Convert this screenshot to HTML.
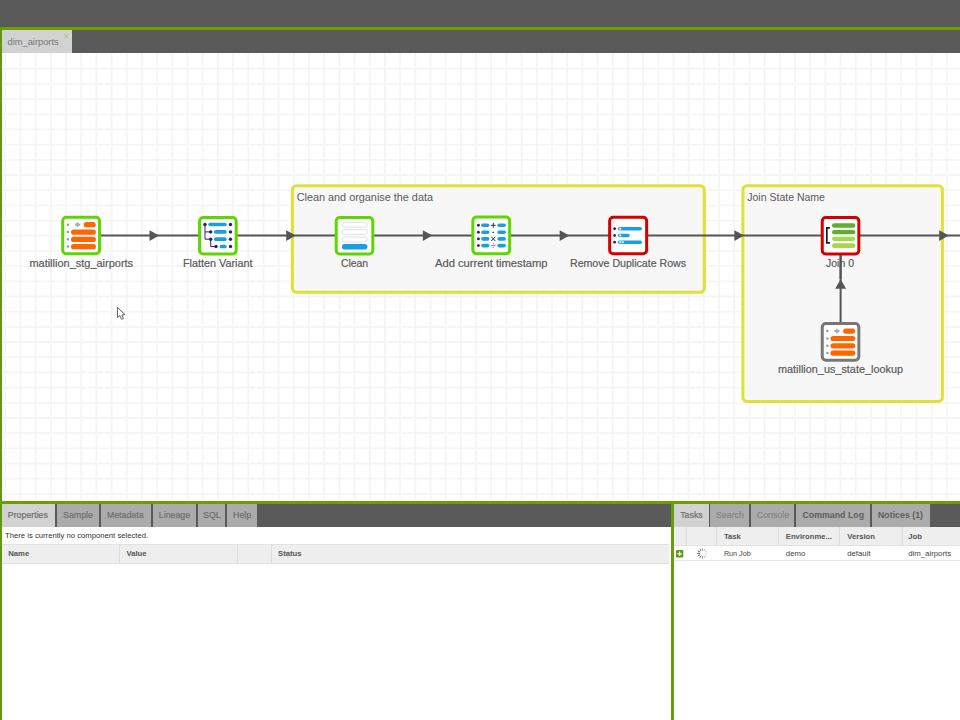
<!DOCTYPE html>
<html><head><meta charset="utf-8">
<style>
html,body{margin:0;padding:0}
body{width:960px;height:720px;overflow:hidden;background:#5a5a5a;position:relative;font-family:"Liberation Sans",sans-serif}
.a{position:absolute}
.tb{position:absolute;top:503.5px;height:23.2px;background:#ababab;color:#6e6e6e;-webkit-text-stroke:0.2px currentColor;font-size:8.8px;white-space:nowrap}
.tb span{position:absolute;top:6.2px;line-height:11px}
.hd{position:absolute;font-weight:bold;color:#555;font-size:7.7px;line-height:10px;white-space:nowrap}
.dt{position:absolute;color:#444;font-size:7.8px;line-height:10px;white-space:nowrap}
.vs{position:absolute;width:1px;background:#dddddd}
</style></head><body>
<!-- frame green lines -->
<div class="a" style="left:0;top:27.3px;width:960px;height:2.6px;background:#6a9e02"></div>
<div class="a" style="left:0;top:27.3px;width:2px;height:693px;background:#5f9a0a"></div>
<!-- job tab -->
<div class="a" style="left:2px;top:30px;width:70px;height:23px;background:#d2d2d2"></div>
<div class="a" style="left:7.5px;top:36.5px;font-size:9.3px;line-height:11px;color:#777;white-space:nowrap">dim_airports</div>
<svg class="a" style="left:0;top:0" width="960" height="60"><path d="M64.1 33.9L68.7 38.5M68.7 33.9L64.1 38.5" stroke="#9ccc5a" stroke-width="1"/></svg>

<!-- CANVAS -->
<div class="a" style="left:2px;top:53px;width:958px;height:448px;background:#fff"></div>
<svg class="a" style="left:0;top:0" width="960" height="720">
<defs><clipPath id="cv"><rect x="2" y="53" width="958" height="448"/></clipPath></defs>
<g clip-path="url(#cv)">
<path d="M5.3 53V500M20.5 53V500M35.7 53V500M50.9 53V500M66.1 53V500M81.2 53V500M96.4 53V500M111.6 53V500M126.8 53V500M142.0 53V500M157.2 53V500M172.3 53V500M187.5 53V500M202.7 53V500M217.9 53V500M233.1 53V500M248.3 53V500M263.5 53V500M278.6 53V500M293.8 53V500M309.0 53V500M324.2 53V500M339.4 53V500M354.6 53V500M369.8 53V500M384.9 53V500M400.1 53V500M415.3 53V500M430.5 53V500M445.7 53V500M460.9 53V500M476.1 53V500M491.2 53V500M506.4 53V500M521.6 53V500M536.8 53V500M552.0 53V500M567.2 53V500M582.3 53V500M597.5 53V500M612.7 53V500M627.9 53V500M643.1 53V500M658.3 53V500M673.5 53V500M688.6 53V500M703.8 53V500M719.0 53V500M734.2 53V500M749.4 53V500M764.6 53V500M779.8 53V500M794.9 53V500M810.1 53V500M825.3 53V500M840.5 53V500M855.7 53V500M870.9 53V500M886.0 53V500M901.2 53V500M916.4 53V500M931.6 53V500M946.8 53V500M2 68.7H960M2 83.9H960M2 99.1H960M2 114.3H960M2 129.4H960M2 144.6H960M2 159.8H960M2 175.0H960M2 190.2H960M2 205.4H960M2 220.6H960M2 235.7H960M2 250.9H960M2 266.1H960M2 281.3H960M2 296.5H960M2 311.7H960M2 326.8H960M2 342.0H960M2 357.2H960M2 372.4H960M2 387.6H960M2 402.8H960M2 418.0H960M2 433.1H960M2 448.3H960M2 463.5H960M2 478.7H960M2 493.9H960" stroke="#f5f5f5" stroke-width="1.8" fill="none"/>
<!-- groups -->
<rect x="292.4" y="185.7" width="411.9" height="106.55" rx="4" fill="#f7f7f7" stroke="#dfe232" stroke-width="3"/>
<rect x="742.9" y="185.7" width="199.5" height="215.7" rx="4" fill="#f7f7f7" stroke="#dfe232" stroke-width="3"/>
<text x="296.7" y="201.3" font-size="10.7" fill="#5a5a5a" textLength="136.3" lengthAdjust="spacingAndGlyphs">Clean and organise the data</text>
<text x="747.25" y="201.3" font-size="10.55" fill="#5a5a5a" textLength="77.7" lengthAdjust="spacingAndGlyphs">Join State Name</text>
<!-- connectors -->
<path d="M81 235.6H960M840.6 235.6V342" stroke="#555" stroke-width="2" fill="none"/>
<g fill="#555">
<path d="M149.5 230.3L159.1 235.6L149.5 240.9Z"/>
<path d="M286.2 230.3L295.8 235.6L286.2 240.9Z"/>
<path d="M422.8 230.3L432.4 235.6L422.8 240.9Z"/>
<path d="M559.7 230.3L569.3 235.6L559.7 240.9Z"/>
<path d="M734.4 230.3L744 235.6L734.4 240.9Z"/>
<path d="M939.2 230.3L948.8 235.6L939.2 240.9Z"/>
<path d="M835.1 288.7L840.6 279.2L846.1 288.7Z"/>
</g>
<!-- node 1 -->
<g transform="translate(81.1 235.5)">
<rect x="-18.4" y="-18.3" width="36.8" height="36.6" rx="3.6" fill="#fff" stroke="#5ed600" stroke-width="3"/>
<g fill="#9a9a9a"><circle cx="-13.2" cy="-10.8" r="1.25"/><circle cx="-13.2" cy="-3.5" r="1.25"/><circle cx="-13.2" cy="3.8" r="1.25"/><circle cx="-13.2" cy="11" r="1.25"/>
<path fill="#aaa" d="M-6.1 -12H-4.3V-13.75L-0.35 -10.85L-4.3 -7.95V-9.7H-6.1Z"/></g>
<g fill="#ff6600"><rect x="2.6" y="-13.5" width="12" height="5.3" rx="2.65"/><rect x="-10.1" y="-6" width="24.9" height="5.2" rx="2.6"/><rect x="-10.1" y="1.3" width="24.9" height="5.2" rx="2.6"/><rect x="-10.1" y="8.6" width="24.9" height="5.2" rx="2.6"/></g>
</g>
<!-- node 2 flatten -->
<g transform="translate(217.9 235.6)">
<rect x="-18.3" y="-18.2" width="36.6" height="36.6" rx="3.6" fill="#fff" stroke="#5ed600" stroke-width="3"/>
<g fill="#1a9fe0"><rect x="-9.6" y="-12.95" width="18.4" height="3.7" rx="1.85"/><rect x="-3.9" y="-5.55" width="12.7" height="3.7" rx="1.85"/><rect x="-3.9" y="1.75" width="12.7" height="3.7" rx="1.85"/><rect x="1.8" y="9.05" width="7" height="3.7" rx="1.85"/></g>
<path d="M-12.9 -11.1V3.6H-7.2V10.9H-1.9M-12.9 -3.7H-7.2" stroke="#2a2370" stroke-width="1" fill="none"/>
<g fill="#2a2370"><circle cx="-12.9" cy="-11.1" r="1.7"/><circle cx="-7.2" cy="-3.7" r="1.7"/><circle cx="-7.2" cy="3.6" r="1.7"/><circle cx="-1.9" cy="10.9" r="1.7"/>
<circle cx="12.6" cy="-11.1" r="1.7"/><circle cx="12.6" cy="-3.7" r="1.7"/><circle cx="12.6" cy="3.6" r="1.7"/><circle cx="12.6" cy="10.9" r="1.7"/></g>
</g>
<!-- node 3 clean -->
<g transform="translate(354.5 235.6)">
<rect x="-18.3" y="-18.2" width="36.6" height="36.6" rx="3.6" fill="#fff" stroke="#5ed600" stroke-width="3"/>
<g fill="#fff" stroke="#dcdce4" stroke-width="0.9"><rect x="-12.5" y="-13.2" width="25.3" height="4.7" rx="2.35"/><rect x="-12.5" y="-5.9" width="25.3" height="4.7" rx="2.35"/><rect x="-12.5" y="1.5" width="25.3" height="4.9" rx="2.4"/></g>
<rect x="-12.6" y="8.4" width="25.5" height="5.6" rx="2.8" fill="#1a9ee0"/>
</g>
<!-- node 4 add timestamp -->
<g transform="translate(491.25 235.4)">
<rect x="-18.4" y="-18.3" width="36.8" height="36.6" rx="3.6" fill="#fff" stroke="#5ed600" stroke-width="3"/>
<g fill="#1a9fe0"><rect x="-10.1" y="-11.9" width="8.2" height="3.6" rx="1.8"/><rect x="6.1" y="-11.9" width="8.6" height="3.6" rx="1.8"/>
<rect x="-10.1" y="-4.9" width="8.2" height="3.6" rx="1.8"/><rect x="6.1" y="-4.9" width="8.6" height="3.6" rx="1.8"/>
<rect x="-10.1" y="1.7" width="8.2" height="3.6" rx="1.8"/><rect x="6.1" y="1.7" width="8.6" height="3.6" rx="1.8"/>
<rect x="-10.1" y="8.4" width="8.2" height="3.6" rx="1.8"/><rect x="6.1" y="8.4" width="8.6" height="3.6" rx="1.8"/></g>
<g fill="#2a2370"><circle cx="-12.85" cy="-10.1" r="1.45"/><circle cx="-12.85" cy="-3.1" r="1.45"/><circle cx="-12.85" cy="3.5" r="1.45"/><circle cx="-12.85" cy="10.2" r="1.45"/></g>
<path d="M2.05 -12.5V-7.7M-0.35 -10.1H4.45M1.1 -3.1H3" stroke="#2a2370" stroke-width="1" fill="none"/>
<path d="M0 1.4L4.1 5.6M4.1 1.4L0 5.6" stroke="#2a2370" stroke-width="1" fill="none"/>
<path d="M-0.3 10.2H4.4" stroke="#8a84c0" stroke-width="1" fill="none"/>
<g fill="#8a84c0"><circle cx="2.05" cy="8.2" r="0.7"/><circle cx="2.05" cy="12.2" r="0.7"/></g>
</g>
<!-- node 5 remove duplicates -->
<g transform="translate(628.15 235.5)">
<rect x="-18.5" y="-18.3" width="37" height="36.6" rx="3.6" fill="#fff" stroke="#d40000" stroke-width="3"/>
<g fill="#1a9fe0"><rect x="-10.35" y="-8.5" width="24.2" height="3.5" rx="1.75"/><rect x="-10.35" y="-1.75" width="11.9" height="3.5" rx="1.75"/><rect x="-10.35" y="4.95" width="24.2" height="3.5" rx="1.75"/></g>
<g fill="#d8f0fc"><rect x="-8.9" y="-7.75" width="2" height="2"/><rect x="-8.9" y="-1" width="2" height="2"/><rect x="-8.9" y="5.7" width="2" height="2"/><rect x="-6.4" y="5.7" width="2" height="2"/></g>
<g fill="#2a2370"><circle cx="-13.55" cy="-6.75" r="1.4"/><circle cx="-13.55" cy="0" r="1.4"/><circle cx="-13.55" cy="6.7" r="1.4"/></g>
</g>
<!-- node 6 join -->
<g transform="translate(840.55 235.6)">
<rect x="-18.3" y="-18.2" width="36.6" height="36.6" rx="3.6" fill="#fff" stroke="#d40000" stroke-width="3"/>
<path d="M-10.6 -7.75H-13.7V7.25H-10.6" stroke="#1c1c1c" stroke-width="1.7" fill="none"/>
<g fill="#5fae2c"><rect x="-8.55" y="-12.3" width="23.3" height="4.4" rx="2.2"/><rect x="-8.55" y="-5.6" width="23.3" height="4.3" rx="2.15"/></g>
<g fill="#a5d84a"><rect x="-8.55" y="1.1" width="23.3" height="4.3" rx="2.15"/><rect x="-8.55" y="7.7" width="23.3" height="4.7" rx="2.3"/></g>
</g>
<!-- node 7 lookup -->
<g transform="translate(840.55 341.9)">
<rect x="-18.3" y="-18.3" width="36.6" height="36.6" rx="3.6" fill="#fff" stroke="#777" stroke-width="3"/>
<g fill="#9a9a9a"><circle cx="-13.2" cy="-10.8" r="1.25"/><circle cx="-13.2" cy="-3.5" r="1.25"/><circle cx="-13.2" cy="3.8" r="1.25"/><circle cx="-13.2" cy="11" r="1.25"/>
<path fill="#aaa" d="M-6.1 -12H-4.3V-13.75L-0.35 -10.85L-4.3 -7.95V-9.7H-6.1Z"/></g>
<g fill="#ff6600"><rect x="2.6" y="-13.5" width="12" height="5.3" rx="2.65"/><rect x="-10.1" y="-6" width="24.9" height="5.2" rx="2.6"/><rect x="-10.1" y="1.3" width="24.9" height="5.2" rx="2.6"/><rect x="-10.1" y="8.6" width="24.9" height="5.2" rx="2.6"/></g>
</g>
<!-- labels -->
<g font-size="10.8" fill="#5a5a5a" stroke="#5a5a5a" stroke-width="0.2" text-anchor="middle">
<text x="81.25" y="266.9" textLength="103.7" lengthAdjust="spacingAndGlyphs">matillion_stg_airports</text>
<text x="217.75" y="266.9" textLength="69.7" lengthAdjust="spacingAndGlyphs">Flatten Variant</text>
<text x="354.55" y="266.9" textLength="27.1" lengthAdjust="spacingAndGlyphs">Clean</text>
<text x="491.25" y="266.9" textLength="112.5" lengthAdjust="spacingAndGlyphs">Add current timestamp</text>
<text x="628" y="266.9" textLength="116" lengthAdjust="spacingAndGlyphs">Remove Duplicate Rows</text>
<text x="840" y="266.9" textLength="28" lengthAdjust="spacingAndGlyphs">Join 0</text>
<text x="840.5" y="373" textLength="125" lengthAdjust="spacingAndGlyphs">matillion_us_state_lookup</text>
</g>
<path d="M840.6 255V279" stroke="#555" stroke-width="2"/>

</g>
<path d="M117.4 307.3L117.5 317.4L119.8 315.6L121.6 319.3L123.4 318.5L121.9 315L125 314.6Z" fill="#fff" stroke="#444" stroke-width="0.85" stroke-linejoin="round"/>
</svg>

<!-- BOTTOM -->
<div class="a" style="left:0;top:501px;width:960px;height:2.5px;background:#6a9e02"></div>
<div class="a" style="left:2px;top:526.7px;width:669px;height:194px;background:#fff"></div>
<div class="a" style="left:674px;top:526.7px;width:286px;height:194px;background:#fff"></div>
<div class="a" style="left:671px;top:501px;width:3px;height:219px;background:#64a00a"></div>

<div class="tb" style="left:2px;width:53px;background:#d2d2d2"><span style="left:5.8px">Properties</span></div>
<div class="tb" style="left:57.2px;width:41.5px"><span style="left:5.9px">Sample</span></div>
<div class="tb" style="left:100.6px;width:50.4px"><span style="left:6.3px">Metadata</span></div>
<div class="tb" style="left:152.8px;width:42.8px"><span style="left:6px">Lineage</span></div>
<div class="tb" style="left:197.5px;width:27.5px"><span style="left:5.6px">SQL</span></div>
<div class="tb" style="left:226.9px;width:30.6px"><span style="left:6.2px">Help</span></div>

<div class="a" style="left:5px;top:530.5px;font-size:7.7px;line-height:10px;color:#333;white-space:nowrap">There is currently no component selected.</div>
<div class="a" style="left:2px;top:543.8px;width:666.6px;height:18.4px;background:#eeeeee;border-top:0.6px solid #e2e2e2;border-bottom:0.6px solid #e2e2e2"></div>
<div class="vs" style="left:119px;top:544px;height:19px"></div>
<div class="vs" style="left:237px;top:544px;height:19px"></div>
<div class="vs" style="left:271px;top:544px;height:19px"></div>
<div class="hd" style="left:8.3px;top:548.5px">Name</div>
<div class="hd" style="left:126.5px;top:548.5px">Value</div>
<div class="hd" style="left:278px;top:548.5px">Status</div>

<div class="tb" style="left:674px;width:34.6px;background:#d2d2d2"><span style="left:6.2px">Tasks</span></div>
<div class="tb" style="left:710.1px;width:39.4px;color:#858585"><span style="left:5.9px">Search</span></div>
<div class="tb" style="left:751.2px;width:43px;color:#858585"><span style="left:5.6px">Console</span></div>
<div class="tb" style="left:796.3px;width:73.7px;color:#5e5e5e;font-weight:bold;-webkit-text-stroke:0"><span style="left:6.2px">Command Log</span></div>
<div class="tb" style="left:872px;width:57.8px;color:#5e5e5e;font-weight:bold;-webkit-text-stroke:0"><span style="left:6px">Notices (1)</span></div>

<div class="a" style="left:674px;top:527px;width:286px;height:18.2px;background:#eeeeee;border-bottom:0.6px solid #e2e2e2"></div>
<div class="vs" style="left:686px;top:527px;height:18px"></div>
<div class="vs" style="left:716px;top:527px;height:18px"></div>
<div class="vs" style="left:778px;top:527px;height:18px"></div>
<div class="vs" style="left:839px;top:527px;height:18px"></div>
<div class="vs" style="left:901.5px;top:527px;height:18px"></div>
<div class="hd" style="left:723.9px;top:532px">Task</div>
<div class="hd" style="left:785.8px;top:532px">Environme...</div>
<div class="hd" style="left:847.2px;top:532px">Version</div>
<div class="hd" style="left:908.2px;top:532px">Job</div>
<div class="a" style="left:674px;top:560.2px;width:286px;height:0.8px;background:#e6e6e6"></div>
<div class="dt" style="left:723.9px;top:548.5px;font-size:7.2px">Run Job</div>
<div class="dt" style="left:785.8px;top:548.5px">demo</div>
<div class="dt" style="left:847.2px;top:548.5px">default</div>
<div class="dt" style="left:908.2px;top:548.5px">dim_airports</div>

<svg class="a" style="left:0;top:0" width="960" height="720"><rect x="676" y="550" width="7.3" height="7.5" rx="1" fill="#5a9a1a"/><path d="M679.6 551.6V556M677.4 553.8H681.8" stroke="#fff" stroke-width="1.2"/><path d="M705.00 553.40L707.70 553.40" stroke="rgb(225,225,225)" stroke-width="1"/><path d="M704.65 554.70L706.99 556.05" stroke="rgb(215,215,215)" stroke-width="1"/><path d="M703.70 555.65L705.05 557.99" stroke="rgb(190,190,190)" stroke-width="1"/><path d="M702.40 556.00L702.40 558.70" stroke="rgb(155,155,155)" stroke-width="1"/><path d="M701.10 555.65L699.75 557.99" stroke="rgb(120,120,120)" stroke-width="1"/><path d="M700.15 554.70L697.81 556.05" stroke="rgb(94,94,94)" stroke-width="1"/><path d="M699.80 553.40L697.10 553.40" stroke="rgb(85,85,85)" stroke-width="1"/><path d="M700.15 552.10L697.81 550.75" stroke="rgb(94,94,94)" stroke-width="1"/><path d="M701.10 551.15L699.75 548.81" stroke="rgb(119,119,119)" stroke-width="1"/><path d="M702.40 550.80L702.40 548.10" stroke="rgb(155,155,155)" stroke-width="1"/><path d="M703.70 551.15L705.05 548.81" stroke="rgb(190,190,190)" stroke-width="1"/><path d="M704.65 552.10L706.99 550.75" stroke="rgb(215,215,215)" stroke-width="1"/></svg>
</body></html>
